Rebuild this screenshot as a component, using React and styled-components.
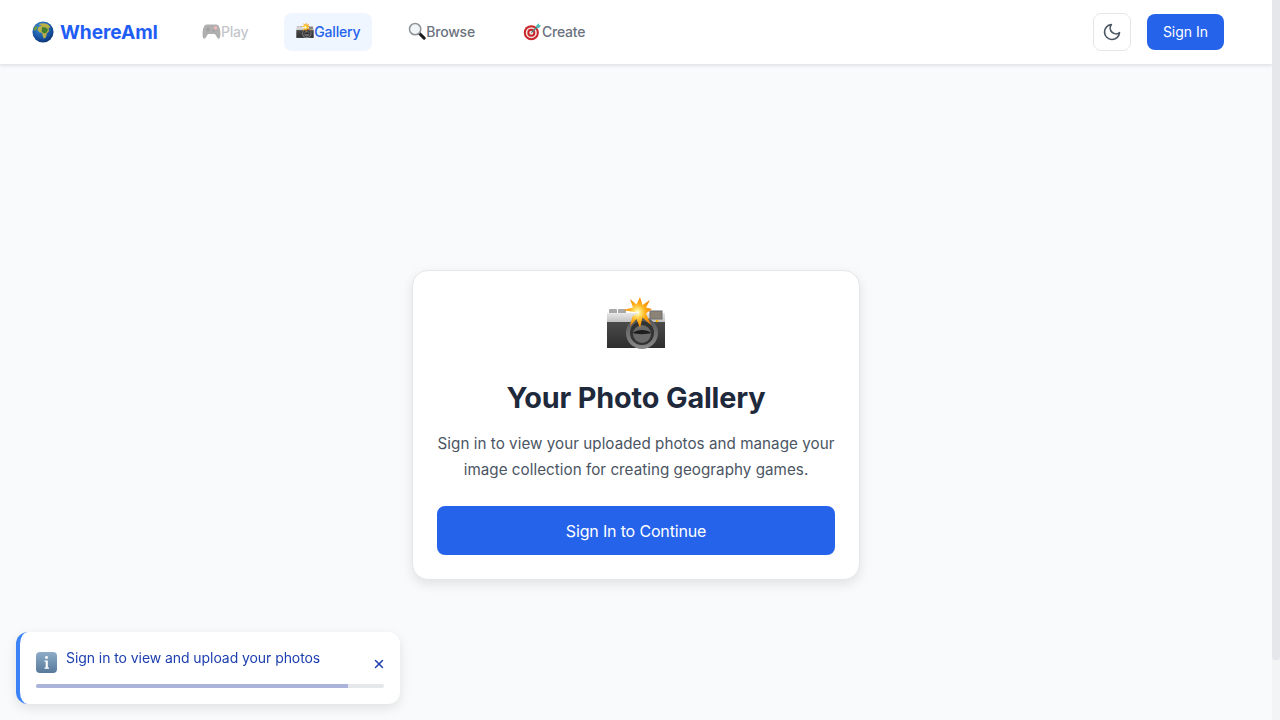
import React from "react";
import styled, { createGlobalStyle } from "styled-components";
import { X } from "lucide-react";

const Global = createGlobalStyle`
  html, body { height: 100%; }
  body {
    margin: 0;
    background: #f9fafb;
    font-family: Inter, "Liberation Sans", sans-serif;
    color: #1f2937;
    overflow: hidden;
  }
  * { box-sizing: border-box; }
`;

const Page = styled.div`
  display: flex;
  height: 720px;
  overflow: hidden;
`;
const Viewport = styled.div`
  flex: 1;
  min-width: 0;
  overflow: hidden;
`;
const ScrollTrack = styled.div`
  width: 8px;
  background: #f3f4f6;
`;
const ScrollThumb = styled.div`
  height: 660px;
  background: #e5e7eb;
  border-radius: 0 0 3px 3px;
`;
const Header = styled.header`
  height: 65px;
  background: #fff;
  border-bottom: 1px solid #e5e7eb;
  box-shadow: 0 1px 3px rgba(0, 0, 0, 0.1);
  display: flex;
  align-items: center;
  justify-content: space-between;
  padding: 0 48px 0 32px;
  position: relative;
`;
const Left = styled.div`
  display: flex;
  align-items: center;
  gap: 32px;
`;
const Logo = styled.div`
  display: flex;
  align-items: center;
  gap: 6px;
  font-size: 19.2px;
  font-weight: 700;
  letter-spacing: -0.005em;
  color: #1f5ef5;
`;
const Nav = styled.nav`
  display: flex;
  align-items: center;
  gap: 24px;
`;
const NavItem = styled.a`
  display: flex;
  align-items: center;
  height: 38px;
  padding: 0 12px 2px;
  border-radius: 8px;
  font-size: 14px;
  font-weight: 450;
  letter-spacing: -0.015em;
  color: ${(p) => (p.$active ? "#2563eb" : "#6b7280")};
  background: ${(p) => (p.$active ? "#eff6ff" : "transparent")};
  opacity: ${(p) => (p.$disabled ? 0.4 : 1)};
`;
const Right = styled.div`
  display: flex;
  align-items: center;
  gap: 16px;
`;
const ThemeButton = styled.button`
  width: 38px;
  height: 38px;
  display: flex;
  align-items: center;
  justify-content: center;
  background: #fff;
  border: 1px solid #e5e7eb;
  border-radius: 8px;
  color: #4b5563;
  padding: 0;
`;
const SignIn = styled.button`
  height: 36px;
  width: 77px;
  border: none;
  border-radius: 8px;
  background: #2563eb;
  color: #fff;
  font: 400 14px Inter, sans-serif;
  padding: 0 0 2px;
`;
const Main = styled.main`
  height: 720px;
  display: flex;
  align-items: center;
  justify-content: center;
`;
const Card = styled.section`
  width: 448px;
  height: 310px;
  background: #fff;
  border: 1px solid #e5e7eb;
  border-radius: 16px;
  box-shadow: 0 4px 12px rgba(0, 0, 0, 0.1);
  padding: 24px;
  display: flex;
  flex-direction: column;
  align-items: center;
  text-align: center;
`;
const BigEmoji = styled.div`
  height: 60px;
  margin-bottom: 25px;
`;
const Title = styled.h2`
  margin: 0 0 16px;
  font-size: 28.8px;
  line-height: 35px;
  font-weight: 700;
  letter-spacing: -0.005em;
  color: #1e293b;
`;
const Text = styled.p`
  margin: 0 0 23px;
  font-size: 15.2px;
  line-height: 26px;
  letter-spacing: 0.0025em;
  color: #4b5563;
`;
const Cta = styled.button`
  width: 100%;
  height: 49px;
  flex: none;
  border: none;
  border-radius: 8px;
  background: #2563eb;
  color: #fff;
  font: 400 16px Inter, sans-serif;
  letter-spacing: -0.01em;
`;
const Toast = styled.div`
  position: fixed;
  left: 16px;
  bottom: 16px;
  width: 384px;
  height: 72px;
  background: #fff;
  border-left: 4px solid #3b82f6;
  border-radius: 12px;
  box-shadow: 0 4px 12px rgba(0, 0, 0, 0.1);
  padding: 16px;
`;
const ToastRow = styled.div`
  display: flex;
  align-items: flex-start;
  gap: 9px;
  height: 36px;
`;
const ToastIcon = styled.span`
  display: flex;
  margin-top: 4px;
`;
const ToastText = styled.span`
  flex: 1;
  font-size: 14px;
  line-height: 20px;
  letter-spacing: -0.005em;
  color: #1e40af;
`;
const Close = styled.button`
  background: none;
  border: none;
  padding: 0;
  margin: 9px -1.5px 0 0;
  color: #1e40af;
  display: flex;
`;
const Track = styled.div`
  height: 4px;
  border-radius: 2px;
  background: #e5e7eb;
  overflow: hidden;
`;
const Fill = styled.div`
  height: 100%;
  background: #aab3d9;
`;
const EmojiSvg = styled.svg`
  flex: none;
  display: block;
`;

const Globe = ({ size }) => (
  <EmojiSvg width={size} height={size} viewBox="0 0 24 24">
    <defs>
      <radialGradient id="gl" cx="0.4" cy="0.3" r="0.8">
        <stop offset="0" stopColor="#3f8fe0" />
        <stop offset="0.7" stopColor="#134a96" />
        <stop offset="1" stopColor="#0b2a5c" />
      </radialGradient>
    </defs>
    <circle cx="12" cy="12" r="11.5" fill="url(#gl)" />
    <path d="M7 3.500c3-1.500 7-1.600 10 0 1.600 1 2.600 2.200 3 3.600l-2 .5.6 3.200-2.600 3-.8 4-2.200 1.600-1.300-3-.6-3.400-3-.6-2-2.300.8-3.200L10.500 5z" fill="#b9b04a" />
    <path d="M11 6.500l4 .6 2.500 2-1.500 3.500-2.500 1-3-2z" fill="#3f7d33" />
    <path d="M1.500 9c1-1.500 2-3 3-3.800l1.300 1.300-.5 2.500-2.300 1.500z" fill="#6f9a3a" />
  </EmojiSvg>
);

const Camera = ({ size }) => {
  const id = `c${size}`;
  return (
    <EmojiSvg width={size} height={size} viewBox="0 0 60 60">
      <defs>
        <linearGradient id={`${id}b`} x1="0" y1="0" x2="0" y2="1">
          <stop offset="0" stopColor="#4a4a4a" />
          <stop offset="1" stopColor="#2e2e2e" />
        </linearGradient>
        <linearGradient id={`${id}t`} x1="0" y1="0" x2="0" y2="1">
          <stop offset="0" stopColor="#e8e8e8" />
          <stop offset="1" stopColor="#bcbcbc" />
        </linearGradient>
        <radialGradient id={`${id}f`}>
          <stop offset="0" stopColor="#fff" />
          <stop offset="0.2" stopColor="#ffe97a" />
          <stop offset="0.55" stopColor="#ffb01a" />
          <stop offset="1" stopColor="#f78400" />
        </radialGradient>
        <linearGradient id={`${id}r`} x1="0" y1="0" x2="0" y2="1">
          <stop offset="0" stopColor="#555" />
          <stop offset="1" stopColor="#8a8a8a" />
        </linearGradient>
      </defs>
      <rect x="3" y="14" width="8" height="6" rx="1" fill="#a9a9a9" />
      <rect x="12" y="14" width="8" height="6" rx="1" fill="#a9a9a9" />
      <rect x="1" y="18" width="58" height="10" fill={`url(#${id}t)`} />
      <rect x="1" y="27" width="58" height="26" fill={`url(#${id}b)`} />
      <rect x="44" y="16" width="12" height="8" fill="#8c8378" stroke="#6a6a6a" />
      <circle cx="51" cy="26" r="1.300" fill="#f5b301" />
      <circle cx="36" cy="38" r="16" fill={`url(#${id}r)`} />
      <circle cx="36" cy="38" r="12" fill="#333" />
      <circle cx="36" cy="39" r="9" fill="#6a6a6a" />
      <path d="M27 38c3-4 15-4 18 0-3 1.500-15 1.500-18 0z" fill="#1d1d1d" />
      <polygon
        points="33,18 17,15 27,12.500 24,4 30.500,9.500 34,2 36.500,10 44,5 40,12.500 46,14 40,18.500 45,30 36.500,22.500 34,33 30.500,24 24,31 26.500,21"
        fill={`url(#${id}f)`}
      />
    </EmojiSvg>
  );
};

const Gamepad = ({ size }) => (
  <EmojiSvg width={size} height={size} viewBox="0 0 24 24">
    <path d="M6 3h12c3 0 4.500 4 5 8 .5 4.500.5 10-2 10-2 0-3-5-5-6H8c-2 1-3 6-5 6-2.500 0-2.500-5.500-2-10 .5-4 2-8 5-8z" fill="#3a3a3a" />
    <path d="M5 8.500h5v2H5zM6.500 7h2v5h-2z" fill="#151515" />
    <circle cx="17" cy="7.500" r="2.200" fill="#d9534f" />
    <circle cx="15" cy="11" r="1.400" fill="#151515" />
  </EmojiSvg>
);

const Magnifier = ({ size }) => (
  <EmojiSvg width={size} height={size} viewBox="0 0 24 24">
    <path d="M14 14l7.500 7.500" stroke="#1c1c1c" strokeWidth="4" strokeLinecap="round" />
    <circle cx="9.500" cy="9.500" r="7.500" fill="#f2f5f7" stroke="#8f9499" strokeWidth="2" />
  </EmojiSvg>
);

const Target = ({ size }) => (
  <EmojiSvg width={size} height={size} viewBox="0 0 24 24">
    <circle cx="10.500" cy="13.500" r="9.500" fill="#c9252d" />
    <circle cx="10.500" cy="13.500" r="7" fill="#f4e2dc" />
    <circle cx="10.500" cy="13.500" r="5" fill="#c9252d" />
    <circle cx="10.500" cy="13.500" r="2.500" fill="#f4e2dc" />
    <path d="M10.500 13.500L19 5" stroke="#3a8f8a" strokeWidth="1.500" />
    <path d="M17 4.500l3-3 .5 2.500 2.500.5-3 3-3-.5z" fill="#45b8b0" />
  </EmojiSvg>
);

const Info = ({ size }) => (
  <EmojiSvg width={size} height={size} viewBox="0 0 21 21">
    <defs>
      <linearGradient id="inf" x1="0" y1="0" x2="0" y2="1">
        <stop offset="0" stopColor="#8fadc9" />
        <stop offset="1" stopColor="#56789a" />
      </linearGradient>
    </defs>
    <rect width="21" height="21" rx="4" fill="url(#inf)" />
    <circle cx="10.500" cy="5.500" r="1.400" fill="#fff" />
    <path d="M8.500 8.500h3.300v7h1.200v1.200H8.500v-1.200h1.200V9.700H8.500z" fill="#fff" />
  </EmojiSvg>
);

const Moon = () => (
  <EmojiSvg width="20" height="20" viewBox="0 0 24 24" fill="none" stroke="currentColor" strokeWidth="2" strokeLinecap="round" strokeLinejoin="round">
    <path d="M21 12.790A9 9 0 1 1 11.210 3 7 7 0 0 0 21 12.790z" />
  </EmojiSvg>
);

export default function App() {
  return (
    <Page>
      <Global />
      <Viewport>
        <Header>
          <Left>
            <Logo><Globe size={22} /><span>WhereAmI</span></Logo>
            <Nav>
              <NavItem $disabled><Gamepad size={19} />Play</NavItem>
              <NavItem $active><Camera size={18} />Gallery</NavItem>
              <NavItem><Magnifier size={18} />Browse</NavItem>
              <NavItem><Target size={19} />Create</NavItem>
            </Nav>
          </Left>
          <Right>
            <ThemeButton aria-label="Toggle theme"><Moon /></ThemeButton>
            <SignIn>Sign In</SignIn>
          </Right>
        </Header>
        <Main>
          <Card>
            <BigEmoji><Camera size={60} /></BigEmoji>
            <Title>Your Photo Gallery</Title>
            <Text>Sign in to view your uploaded photos and manage your image collection for creating geography games.</Text>
            <Cta>Sign In to Continue</Cta>
          </Card>
        </Main>
      </Viewport>
      <ScrollTrack><ScrollThumb /></ScrollTrack>
      <Toast>
        <ToastRow>
          <ToastIcon><Info size={21} /></ToastIcon>
          <ToastText>Sign in to view and upload your photos</ToastText>
          <Close aria-label="Close"><X size={14} strokeWidth={2.5} /></Close>
        </ToastRow>
        <Track><Fill style={{ width: "89.7%" }} /></Track>
      </Toast>
    </Page>
  );
}
